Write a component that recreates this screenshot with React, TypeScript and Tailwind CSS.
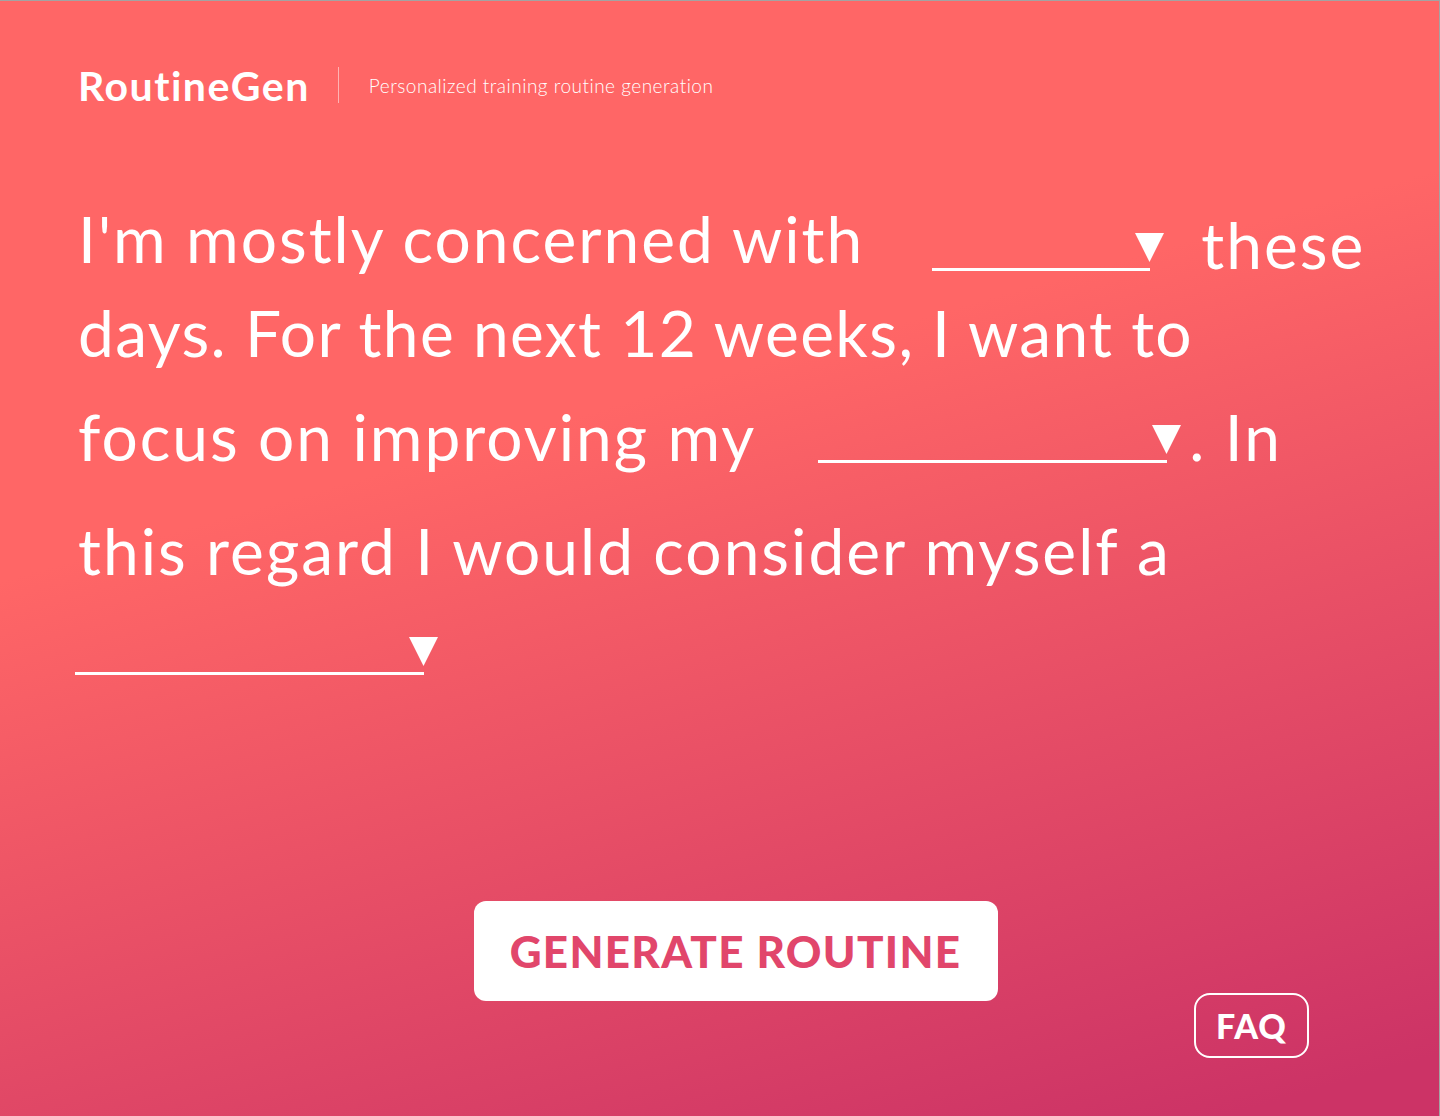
import React from "react";

function Blank({ lineClass, className = "" }: { lineClass: string; className?: string }) {
  return (
    <span className={`flex items-end shrink-0 ${className}`}>
      <span className={`block border-b-[3px] border-white ${lineClass}`} />
      <svg viewBox="0 0 29 29" className="-ml-[15px] mb-[9px] h-[29px] w-[29px] shrink-0" aria-hidden>
        <polygon points="0,0 29,0 14.5,29" fill="white" />
      </svg>
    </span>
  );
}

// base style of the big sentence text; letter spacing is set per line
const big = "whitespace-nowrap text-[64px] leading-[64px] font-normal";

export default function App() {
  return (
    <div className="h-[1116px] w-full overflow-hidden border-t border-r border-[#a3a3a3] bg-[linear-gradient(164deg,#ff6666_38%,#cc3366_96%)] font-['Lato','Liberation_Sans',sans-serif] text-white">
      <header className="flex h-[36px] items-center px-[78px] mt-[66px]">
        <span className="text-[41px] font-bold leading-none tracking-[1.5px]">RoutineGen</span>
        <span className="ml-[28px] h-[36px] w-px bg-white/50" />
        <span className="ml-[30px] text-[19px] font-light leading-none tracking-[0.5px]">Personalized training routine generation</span>
      </header>

      <section className="mt-[87px] flex flex-col pl-[78px]">
        <div className="flex h-[87px] items-end">
          <span className={`${big} tracking-[2px] mb-[6px]`}>I'm mostly concerned with</span>
          <Blank lineClass="w-[218px]" className="ml-[68px] mb-[6px]" />
          <span className={`${big} tracking-[2px] ml-[37px]`}>these</span>
        </div>
        <div className="flex h-[88px] items-end">
          <span className={`${big} tracking-[1.4px]`}>days. For the next 12 weeks, I want to</span>
        </div>
        <div className="flex h-[104px] items-end">
          <span className={`${big} tracking-[2px]`}>focus on improving my</span>
          <Blank lineClass="w-[349px]" className="ml-[62px] mb-[6px]" />
          <span className={`${big} tracking-[2px] ml-[8px]`}>. In</span>
        </div>
        <div className="flex h-[114px] items-end">
          <span className={`${big} tracking-[2px]`}>this regard I would consider myself a</span>
        </div>
        <div className="flex h-[92px] items-end">
          <Blank lineClass="w-[349px]" className="-ml-[3px]" />
        </div>
      </section>

      <div className="mt-[226px] flex justify-center pl-[32px]">
        <button className="flex h-[100px] w-[524px] items-center justify-center rounded-[12px] bg-white text-[44px] font-black leading-none tracking-[1.3px] text-[#e1466b]">
          GENERATE ROUTINE
        </button>
      </div>

      <div className="-mt-[8px] flex justify-end pr-[130px]">
        <button className="flex h-[65px] w-[115px] items-center justify-center rounded-[16px] border-2 border-white text-[34px] font-black leading-none tracking-[1px] text-white">
          FAQ
        </button>
      </div>
    </div>
  );
}
